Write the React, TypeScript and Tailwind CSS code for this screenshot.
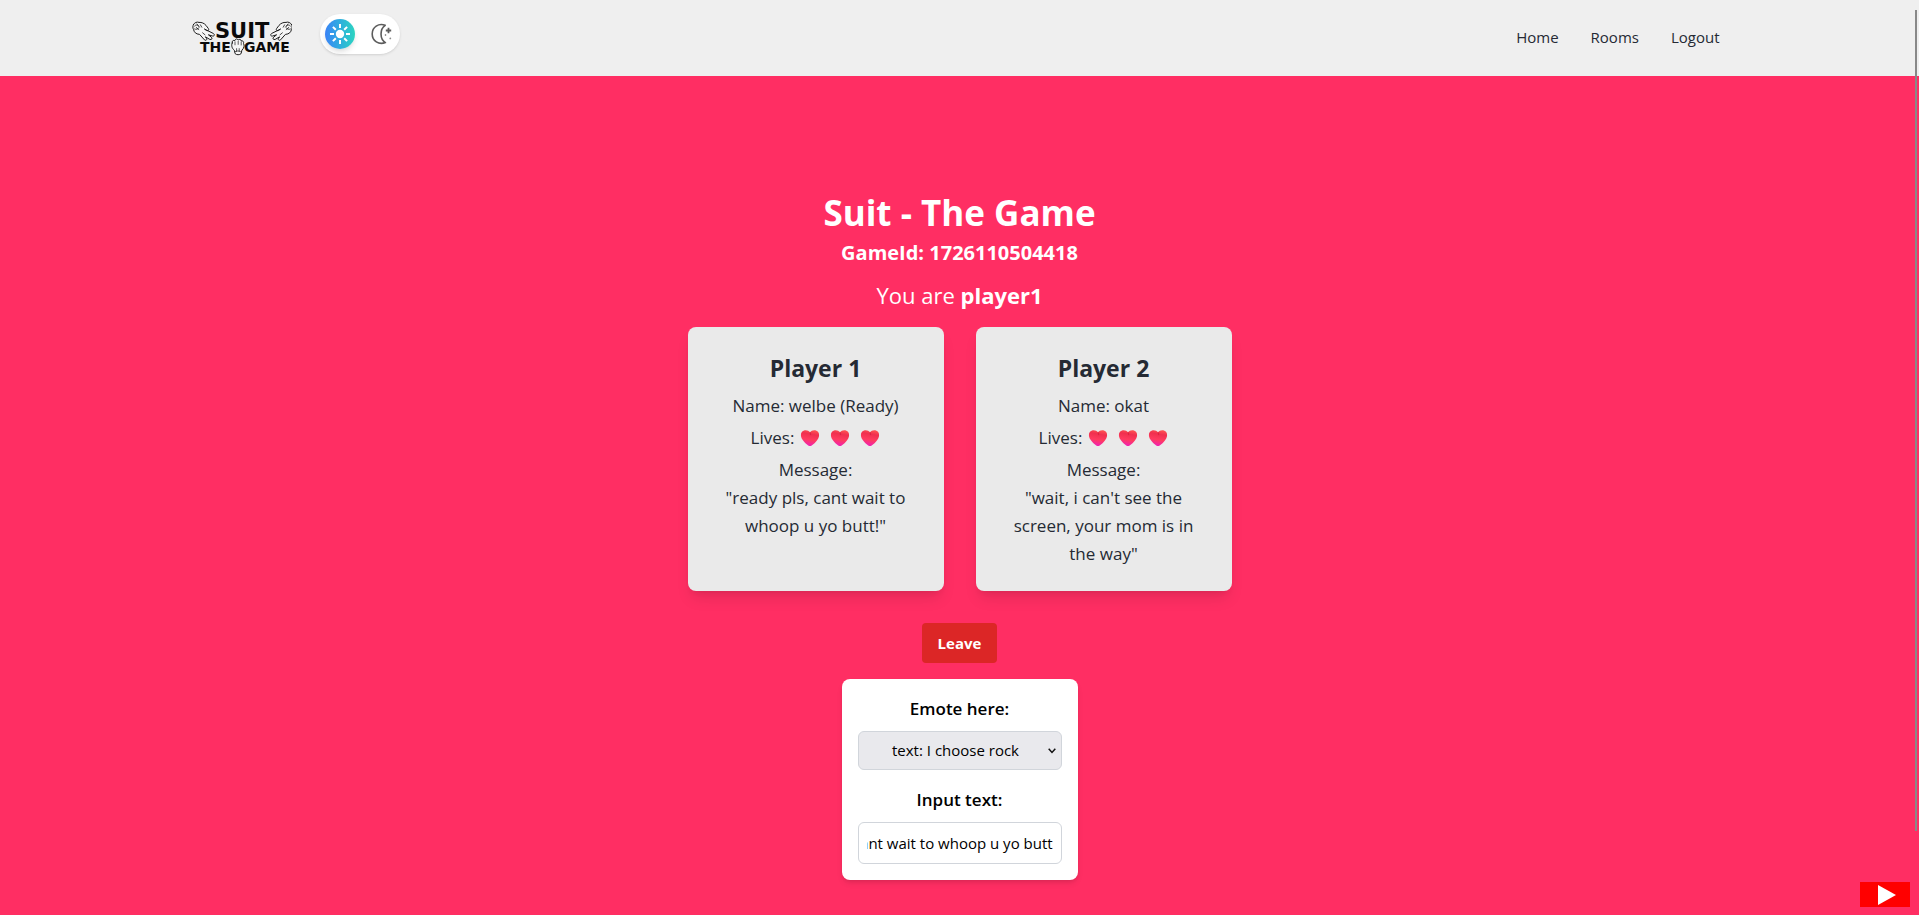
const LogoHand = () => (
  <g stroke="#1c1c1c" strokeWidth="1" strokeLinejoin="round" strokeLinecap="round">
    <path
      d="M1.500 4.500C2.500 2.500 5 1.600 7 2.400c2.600-.2 5.200.8 7 3l2.400 3.200c1 1.600-.6 2.600-2 1.800l-2-1.400 8.800 4.400c2 1.200 1.200 3-.8 2.600l-4-1.200 3 2.400c1.400 1.400.2 2.800-1.600 2.200l-4.400-2.600 1.200 1.800c.6 1.600-1 2.200-2.200 1.200l-4.800-5.400C3.800 14.200 2 12 1.600 9.600.6 8 .6 6 1.500 4.500Z"
      fill="#f6f6f6"
    />
    <path
      d="M2.600 6c1.200-1.400 3-1.400 4 0M2.600 9c1.600.8 3.600.2 4.200-1.200M5 4l2.400 3M4.200 7.400l2.600 2.200M8.400 4.800l1.400 2.400M10.600 12.800l2.400 2"
      fill="none"
      strokeWidth=".8"
    />
  </g>
);

const Logo = () => (
  <svg width="100" height="36" viewBox="0 0 100 36" role="img" aria-label="Suit The Game">
    <LogoHand />
    <g transform="translate(101 0) scale(-1 1)">
      <LogoHand />
    </g>
    <g fill="#0a0a0a" fontFamily="'DejaVu Sans', sans-serif" fontWeight="700">
      <text x="23" y="18" fontSize="21">SUIT</text>
      <text x="8" y="32" fontSize="14">THE</text>
      <text x="52" y="32" fontSize="14">GAME</text>
    </g>
    <g stroke="#1c1c1c" strokeWidth="1" strokeLinejoin="round" strokeLinecap="round">
      <path
        d="M40.200 23c-.6-2 1.200-3.200 2.600-2.400.6-2 2.600-2.200 3.400-.6 1.200-1.200 3-.6 3.100 1 1.700-.5 2.700.8 2.200 2.600 1.200 1.600.6 4.600-1.600 6.600l-.8 3.400c-1.600 1.500-4.400 1.500-6 0l-.8-3.400c-2.400-1.800-3.300-5-2.100-7.200Z"
        fill="#f6f6f6"
      />
      <path d="M43 21.800v3M46.200 21.200v3.200M49.200 22v3M43.400 31.500c1.600-.8 3.400-.8 5 0M44.600 28.600v3M47.200 28.600v3" fill="none" strokeWidth=".7" />
    </g>
  </svg>
);

const SunIcon = () => (
  <svg width="20" height="20" viewBox="0 0 20 20" fill="none" stroke="#fff" strokeWidth="2" aria-hidden="true">
    <circle cx="10" cy="10" r="4.200" fill="#fff" stroke="none" />
    <path d="M10 0v4M10 16v4M0 10h4M16 10h4M2.900 2.900l2.900 2.900M14.200 14.200l2.900 2.900M2.900 17.100l2.900-2.900M14.200 5.800l2.900-2.900" />
  </svg>
);

const MoonIcon = () => (
  <svg width="22" height="22" viewBox="0 0 22 22" aria-hidden="true">
    <path d="M14.200 2.300C7.500-.2 1.200 4.200 1.200 11c0 6.900 6.600 11.200 13.200 8.600C8.600 16.200 8.600 6 14.200 2.300Z" fill="none" stroke="#5c5c5c" strokeWidth="1.600" strokeLinejoin="round" />
    <path d="M17.500 4.800v5.400M14.800 7.500h5.400" stroke="#5c5c5c" strokeWidth="1.800" />
    <circle cx="14.500" cy="12" r=".8" fill="#5c5c5c" />
    <circle cx="19.300" cy="15.400" r=".9" fill="#8c8c8c" />
  </svg>
);

const Heart = () => (
  <svg width="20" height="18" viewBox="0 0 20 18" aria-hidden="true">
    <defs>
      <linearGradient id="heart" x1="0.600" y1="0" x2="0.400" y2="1">
        <stop offset="0" stopColor="#ff5252" />
        <stop offset=".25" stopColor="#f0304f" />
        <stop offset=".6" stopColor="#ff3b5f" />
        <stop offset="1" stopColor="#f020b8" />
      </linearGradient>
    </defs>
    <path d="M10 3.200C8.200.6 3.800.4 1.800 3 .2 5.200.8 8.600 2.900 11.200 4.900 13.700 7.800 17 10 17s5.100-3.300 7.100-5.800C19.200 8.600 19.800 5.200 18.200 3c-2-2.600-6.400-2.400-8.200.2Z" fill="url(#heart)" />
    <path d="M10 3.400c.6 1 .8 1.800.5 2.800" stroke="#d81f3c" strokeWidth="1.200" fill="none" opacity=".7" />
  </svg>
);

type Player = { title: string; name: string; lives: number; message: string };

const players: Player[] = [
  { title: 'Player 1', name: 'welbe (Ready)', lives: 3, message: 'ready pls, cant wait to whoop u yo butt!' },
  { title: 'Player 2', name: 'okat', lives: 3, message: "wait, i can't see the screen, your mom is in the way" },
];

const PlayerCard = ({ title, name, lives, message }: Player) => (
  <section className="flex w-64 flex-col gap-1 rounded-lg bg-[#eaeaea] px-6 pt-[25px] pb-[23px] text-center text-[17px] leading-7 text-[#252a34] shadow-lg">
    <h2 className="mb-1 text-[23px] leading-8 font-bold">{title}</h2>
    <p>{`Name: ${name}`}</p>
    <p className="flex items-center justify-center">
      Lives:
      <span className="ml-1.5 flex gap-2.5">
        {Array.from({ length: lives }, (_, i) => (
          <Heart key={i} />
        ))}
      </span>
    </p>
    <div>
      <p>Message:</p>
      <p>{`"${message}"`}</p>
    </div>
  </section>
);

export default function App() {
  return (
    <div className="flex min-h-screen flex-col bg-[#ff2e63] font-['Open_Sans','Noto_Sans',sans-serif]">
      <header className="bg-[#efefef]">
        <div className="mx-auto flex h-19 w-full max-w-[1536px] items-center justify-between pr-2">
          <div className="flex items-center gap-7">
            <a href="#home">
              <Logo />
            </a>
            <div className="mb-2 flex h-10 w-20 items-center justify-between rounded-full bg-white pr-[3px] pl-[5px] shadow-sm">
              <button type="button" aria-label="Light mode" className="flex size-[30px] items-center justify-center rounded-full bg-linear-to-r from-[#3b82f6] to-[#2dd4bf] shadow-md">
                <SunIcon />
              </button>
              <button type="button" aria-label="Dark mode" className="flex size-[30px] items-center justify-center rounded-full">
                <MoonIcon />
              </button>
            </div>
          </div>
          <nav className="mb-0.5 flex gap-8 text-[15px] leading-6 text-[#252a34]">
            <a href="#home">Home</a>
            <a href="#rooms">Rooms</a>
            <a href="#logout">Logout</a>
          </nav>
        </div>
      </header>

      <main className="flex flex-1 flex-col items-center px-4 pt-[117px] pb-8">
        <h1 className="mb-1.5 text-[35px] leading-10 font-bold text-white">Suit - The Game</h1>
        <p className="mb-3 text-[20px] leading-7 font-bold text-white">GameId: 1726110504418</p>
        <p className="mb-4 text-[22px] leading-8 text-white">
          You are <strong className="font-bold">player1</strong>
        </p>

        <div className="mb-8 flex flex-wrap justify-center gap-8">
          {players.map((player) => (
            <PlayerCard key={player.title} {...player} />
          ))}
        </div>

        <button type="button" className="mb-4 h-10 rounded bg-[#dc2626] px-4 text-[15px] font-bold text-white">
          Leave
        </button>

        <form className="flex w-59 flex-col rounded-lg bg-white p-4 text-center text-black shadow-md">
          <label htmlFor="emote" className="mb-2 text-[17px] leading-7 font-semibold">
            Emote here:
          </label>
          <div className="relative mb-4">
            <select id="emote" className="block h-[39px] w-full appearance-none rounded-md border border-[#d1d5db] bg-[#e9e9ed] pr-5 pl-3 text-center text-[15px]">
              <option>text: I choose rock</option>
            </select>
            <svg className="pointer-events-none absolute top-4 right-1.5" width="8" height="8" viewBox="0 0 8 8" aria-hidden="true">
              <path d="M.7 1.800L4 5.400l3.300-3.600" fill="none" stroke="#111" strokeWidth="1.500" />
            </svg>
          </div>
          <label htmlFor="message" className="mb-2 text-[17px] leading-7 font-semibold">
            Input text:
          </label>
          <input
            id="message"
            type="text"
            defaultValue="ready pls, cant wait to whoop u yo butt"
            ref={(el) => {
              if (el) el.scrollLeft = el.scrollWidth;
            }}
            className="h-[42px] w-full rounded-md border border-[#d1d5db] bg-white px-2 text-[15px]"
          />
        </form>
      </main>

      <button type="button" aria-label="Play" className="fixed right-[9px] bottom-2 flex h-[25px] w-[50px] items-center justify-center bg-[#ff0000] pl-1">
        <svg width="18" height="20" viewBox="0 0 18 20" aria-hidden="true">
          <path d="M0 0l18 10L0 20Z" fill="#fff" />
        </svg>
      </button>
      <div className="fixed top-2.5 right-0.5 bottom-[84px] w-0.5 bg-[#888888]" />
    </div>
  );
}
